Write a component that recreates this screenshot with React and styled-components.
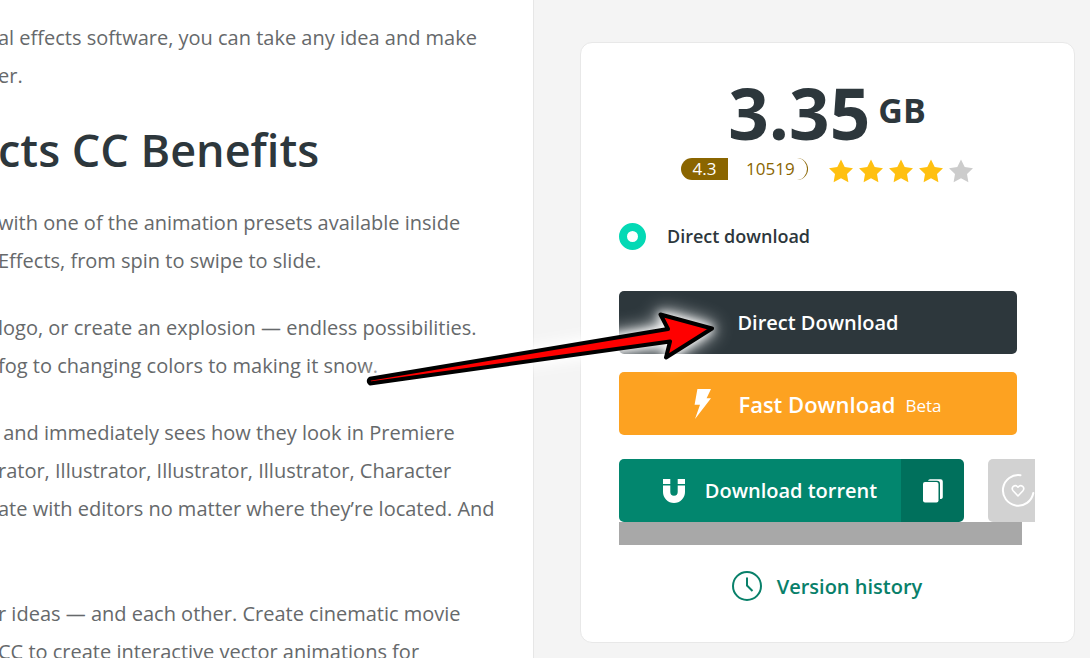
import React, { Component } from 'react'
import styled, { createGlobalStyle } from 'styled-components'

const GlobalStyle = createGlobalStyle`
    * {
        box-sizing: border-box;
    }
    body {
        margin: 0;
        background: #f4f4f4;
        color: #2d373c;
        font-family: "Open Sans", "Noto Sans", sans-serif;
    }
    button {
        font-family: inherit;
        border: 0;
        padding: 0;
        cursor: pointer;
    }
`

const Page = styled.div`
    display: flex;
    height: 100vh;
    overflow: hidden;
`

const Article = styled.main`
    flex: 1;
    min-width: 0;
    padding-top: 19px;
    overflow: hidden;
    white-space: nowrap;
    text-indent: -2px;
    background: white;
`

const Paragraph = styled.p`
    margin: 0 0 29px;
    color: #66696b;
    font-size: 20px;
    line-height: 38px;
`

const Line = styled.span`
    display: block;
    min-height: 38px;
    white-space: pre;
`

const Title = styled.h2`
    margin: 0 0 28px;
    font-size: 45px;
    font-weight: 600;
    line-height: 52px;
`

const Sidebar = styled.aside`
    position: relative;
    flex: none;
    width: 557px;
    padding: 42px 15px 15px 46px;
    border-left: 1px solid #e6e6e6;
`

const Card = styled.section`
    display: flex;
    flex-direction: column;
    height: 601px;
    padding: 38px 39px 38px 38px;
    border: 1px solid #e8e8e8;
    border-radius: 12px;
    background: white;
`

const FileSize = styled.div`
    display: flex;
    justify-content: center;
    gap: 8px;
    height: 77px;
    font-size: 71px;
    font-weight: 700;
    line-height: 64px;
`

const Unit = styled.span`
    font-size: 34px;
    line-height: 58px;
`

const Rating = styled.div`
    display: flex;
    justify-content: center;
    height: 24px;
    font-size: 17px;
    line-height: 22px;
`

const Score = styled.span`
    width: 47px;
    height: 22px;
    border-radius: 11px 0 0 11px;
    background: #8a6500;
    color: white;
    text-align: center;
`

const Votes = styled.span`
    width: 80px;
    height: 22px;
    padding-left: 18px;
    border-right: 1px solid #8a6500;
    border-radius: 0 11px 11px 0;
    color: #8a6500;
`

const Stars = styled.span`
    display: flex;
    gap: 6px;
    margin: 1px 0 0 21px;
`

const Option = styled.label`
    display: flex;
    align-items: center;
    gap: 21px;
    height: 28px;
    margin-top: 40px;
    font-size: 18px;
    font-weight: 600;
`

const Radio = styled.input`
    appearance: none;
    width: 27px;
    height: 27px;
    margin: 0;
    border: 8px solid #04d9b5;
    border-radius: 50%;
    background: white;
`

const Actions = styled.div`
    display: flex;
    flex-direction: column;
    margin: 41px 18px 0 0;
`

const DownloadButton = styled.button`
    display: flex;
    align-items: center;
    justify-content: center;
    height: 63px;
    margin-bottom: ${props => props.$last ? '24px' : '18px'};
    border-radius: 5px;
    background: ${props => props.$color};
    color: white;
    font-size: ${props => props.$large ? '22px' : '20px'};
    font-weight: 600;
`

const BoltSpace = styled.span`
    display: flex;
    margin-right: 26px;
`

const Beta = styled.small`
    margin: 4px 0 0 10px;
    font-size: 17px;
    font-weight: 400;
`

const TorrentRow = styled.div`
    display: flex;
    gap: 24px;
    height: 63px;
    overflow: hidden;
`

const TorrentGroup = styled.div`
    display: flex;
    flex: none;
    width: 345px;
    border-radius: 5px;
    overflow: hidden;
`

const TorrentButton = styled.button`
    display: flex;
    align-items: center;
    justify-content: center;
    gap: 20px;
    flex: 1;
    padding-left: 20px;
    background: #02866e;
    color: white;
    font-size: 20px;
    font-weight: 600;
`

const CopyButton = styled.button`
    display: flex;
    align-items: center;
    justify-content: center;
    width: 63px;
    background: #00705c;
`

const FavoriteButton = styled.button`
    display: flex;
    align-items: center;
    flex: none;
    width: 63px;
    padding-left: 13px;
    border-radius: 5px;
    background: #d2d2d2;
`

const Strip = styled.div`
    height: 23px;
    margin-right: 13px;
    background: #a8a8a8;
`

const HistoryLink = styled.a`
    display: flex;
    align-items: center;
    align-self: center;
    gap: 15px;
    height: 32px;
    margin-top: 25px;
    color: #08806a;
    font-size: 20px;
    font-weight: 600;
    text-decoration: none;
`

// pointer drawn over both columns, tied to the sidebar
const Pointer = styled.svg`
    position: absolute;
    top: 290px;
    left: -184px;
    pointer-events: none;
    overflow: visible;
    filter: drop-shadow(0 0 5px white) drop-shadow(0 0 9px white);
`

const Star = ({ color }) => (
    <svg width="24" height="24" viewBox="0 0 24 24">
        <path fill={color} d="M12 0.5 L15.7 8 L24 9.2 L18 15 L19.4 23.2 L12 19.3 L4.6 23.2 L6 15 L0 9.2 L8.3 8 Z" />
    </svg>
)

const Bolt = () => (
    <svg width="18" height="30" viewBox="0 0 18 30" fill="white">
        <path d="M3.4 0 H17 L12.6 9.2 H17 L1 30 L6 15.8 H0.6 Z" />
    </svg>
)

const Magnet = () => (
    <svg width="22" height="24" viewBox="0 0 22 24" fill="white">
        <path d="M0 0 H7.3 V5 H0 Z M14.7 0 H22 V5 H14.7 Z" />
        <path d="M0 6.4 H7.3 V13 A3.7 3.7 0 0 0 14.7 13 V6.4 H22 V13 A11 11 0 0 1 0 13 Z" />
    </svg>
)

const Copy = () => (
    <svg width="20" height="24" viewBox="0 0 20 24" fill="white">
        <rect x="0" y="3" width="15.5" height="20.5" rx="2" />
        <path d="M5 1.8 Q5.4 0.3 7 0.3 H17.6 Q19.8 0.3 19.8 2.5 V18 Q19.8 20 17 20 V5 Q17 1.8 14 1.8 Z" />
    </svg>
)

const Favorite = () => (
    <svg width="34" height="34" viewBox="0 0 34 34" fill="none" stroke="white">
        <path strokeWidth="2" strokeLinecap="round" d="M19.5 1.2 A15.3 15.3 0 1 0 32.3 19" />
        <path strokeWidth="1.6" strokeLinejoin="round" d="M17 22 L12.3 17 C9.4 13.6 13.8 9.6 17 13.2 C20.2 9.6 24.6 13.6 21.7 17 Z" />
    </svg>
)

const Clock = () => (
    <svg width="30" height="30" viewBox="0 0 30 30" fill="none" stroke="#08806a" strokeWidth="2">
        <circle cx="15" cy="15" r="14" />
        <path d="M15 6.5 V14.5 L20.5 20" />
    </svg>
)

const intro = ['al effects software, you can take any idea and make', 'er.']

const paragraphs = [
    ['with one of the animation presets available inside', 'Effects, from spin to swipe to slide.'],
    ['logo, or create an explosion — endless possibilities.', 'fog to changing colors to making it snow.'],
    [
        ' and immediately sees how they look in Premiere',
        'rator, Illustrator, Illustrator, Illustrator, Character',
        'ate with editors no matter where they’re located. And',
        ''
    ],
    ['r ideas — and each other. Create cinematic movie', 'CC to create interactive vector animations for']
]

const Text = ({ lines }) => (
    <Paragraph>
        {lines.map((line, i) => <Line key={i}>{line}</Line>)}
    </Paragraph>
)

class App extends Component {

    render() {
        return (
            <Page>
                <GlobalStyle />
                <Article>
                    <Text lines={intro} />
                    <Title>cts CC Benefits</Title>
                    {paragraphs.map((lines, i) => <Text key={i} lines={lines} />)}
                </Article>
                <Sidebar>
                    <Card>
                        <FileSize>3.35<Unit>GB</Unit></FileSize>
                        <Rating>
                            <Score>4.3</Score>
                            <Votes>10519</Votes>
                            <Stars>
                                {[1, 2, 3, 4, 5].map(n => <Star key={n} color={n < 5 ? '#ffc010' : '#cccccc'} />)}
                            </Stars>
                        </Rating>
                        <Option>
                            <Radio type="radio" name="method" defaultChecked />
                            Direct download
                        </Option>
                        <Actions>
                            <DownloadButton $color="#2d373c">Direct Download</DownloadButton>
                            <DownloadButton $color="#fda221" $large $last>
                                <BoltSpace><Bolt /></BoltSpace>
                                Fast Download
                                <Beta>Beta</Beta>
                            </DownloadButton>
                        </Actions>
                        <TorrentRow>
                            <TorrentGroup>
                                <TorrentButton><Magnet />Download torrent</TorrentButton>
                                <CopyButton aria-label="Copy link"><Copy /></CopyButton>
                            </TorrentGroup>
                            <FavoriteButton aria-label="Add to favorites"><Favorite /></FavoriteButton>
                        </TorrentRow>
                        <Strip />
                        <HistoryLink href="#history"><Clock />Version history</HistoryLink>
                    </Card>
                    <Pointer width="400" height="110" viewBox="350 290 400 110">
                        <path
                            fill="#ff0000"
                            stroke="black"
                            strokeWidth="4"
                            strokeLinejoin="round"
                            d="M370 378.8 L668 329 L660.5 314.5 L712 328.5 L666 357.5 L670 341.5 L370 383.4 Q367.5 381 370 378.8 Z"
                        />
                    </Pointer>
                </Sidebar>
            </Page>
        )
    }

}

export default App
